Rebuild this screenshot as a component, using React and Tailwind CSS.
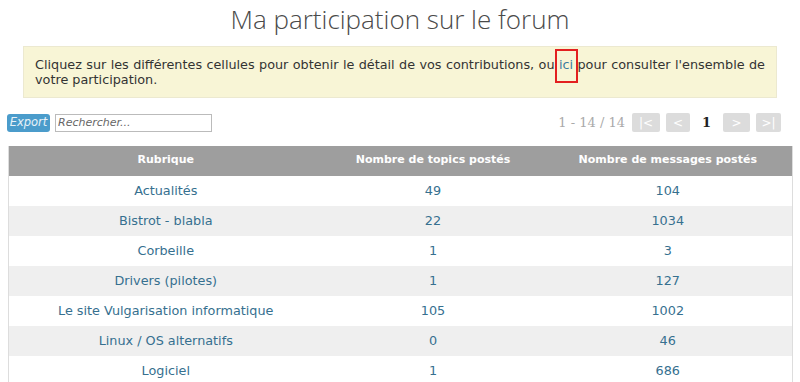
import React from 'react';

const rows = [
  { name: 'Actualités', topics: 49, messages: 104 },
  { name: 'Bistrot - blabla', topics: 22, messages: 1034 },
  { name: 'Corbeille', topics: 1, messages: 3 },
  { name: 'Drivers (pilotes)', topics: 1, messages: 127 },
  { name: 'Le site Vulgarisation informatique', topics: 105, messages: 1002 },
  { name: 'Linux / OS alternatifs', topics: 0, messages: 46 },
  { name: 'Logiciel', topics: 1, messages: 686 },
];

const PageButton = ({ label, w }) => (
  <span className={`flex h-[19px] items-center justify-center rounded-[2px] bg-[#dcdcdc] text-[12px] text-white ${w}`}>
    {label}
  </span>
);

const App = () => {
  return (
    <div className="h-[382px] w-[800px] overflow-hidden bg-white font-['DejaVu_Sans',sans-serif]">
      <h1 className="pt-[1px] text-center font-['Open_Sans',sans-serif] text-[26px] font-light leading-[36px] text-[#4a4a4a]">
        Ma participation sur le forum
      </h1>

      <div className="mx-[23px] mt-[9px] border border-[#ece9d0] bg-[#f8f5d6] px-[11px] pb-[10px] pt-[10px] text-justify text-[12.8px] leading-[15px] text-[#333]">
        Cliquez sur les différentes cellules pour obtenir le détail de vos contributions, ou{' '}
        <span className="relative text-[#3c7da0]">
          ici
          <span className="absolute -left-[4px] -right-[5px] -top-[8px] -bottom-[11px] border-2 border-[#e32020]" />
        </span>{' '}
        pour consulter l'ensemble de votre participation.
      </div>

      <div className="mx-[7px] mt-[15px] flex items-center justify-between">
        <div className="flex items-center gap-[5px]">
          <span className="flex h-[18px] w-[43px] items-center justify-center rounded-[3px] bg-[#4b9ccb] text-[11.5px] italic text-[#e8f2f8]">
            Export
          </span>
          <input
            className="h-[18px] w-[157px] border border-[#bbb] px-[2px] text-[11px] italic text-[#555] outline-none placeholder:text-[#666]"
            placeholder="Rechercher..."
          />
        </div>
        <div className="mr-[12px] flex items-center gap-[6px]">
          <span className="mr-[1px] font-['DejaVu_Serif',serif] text-[13px] text-[#aaa]">1 - 14 / 14</span>
          <PageButton label="|<" w="w-[28px]" />
          <PageButton label="<" w="w-[24px]" />
          <span className="mx-[6px] font-['DejaVu_Serif',serif] text-[13px] font-bold text-[#222]">1</span>
          <PageButton label=">" w="w-[27px]" />
          <PageButton label=">|" w="w-[25px]" />
        </div>
      </div>

      <table className="ml-[8px] mt-[13px] w-[785px] border-collapse border-l border-r border-[#ddd]">
        <thead>
          <tr className="h-[30px] bg-[#9e9e9e] text-[11px] font-bold text-white">
            <th className="w-[314px]">Rubrique</th>
            <th className="w-[221px]">Nombre de topics postés</th>
            <th>Nombre de messages postés</th>
          </tr>
        </thead>
        <tbody>
          {rows.map((row, i) => (
            <tr
              key={row.name}
              className={`h-[30px] text-center text-[12.8px] text-[#36708f] ${i % 2 === 1 ? 'bg-[#efefef]' : 'bg-white'}`}
            >
              <td>{row.name}</td>
              <td>{row.topics}</td>
              <td>{row.messages}</td>
            </tr>
          ))}
        </tbody>
      </table>
    </div>
  );
};

export default App;
